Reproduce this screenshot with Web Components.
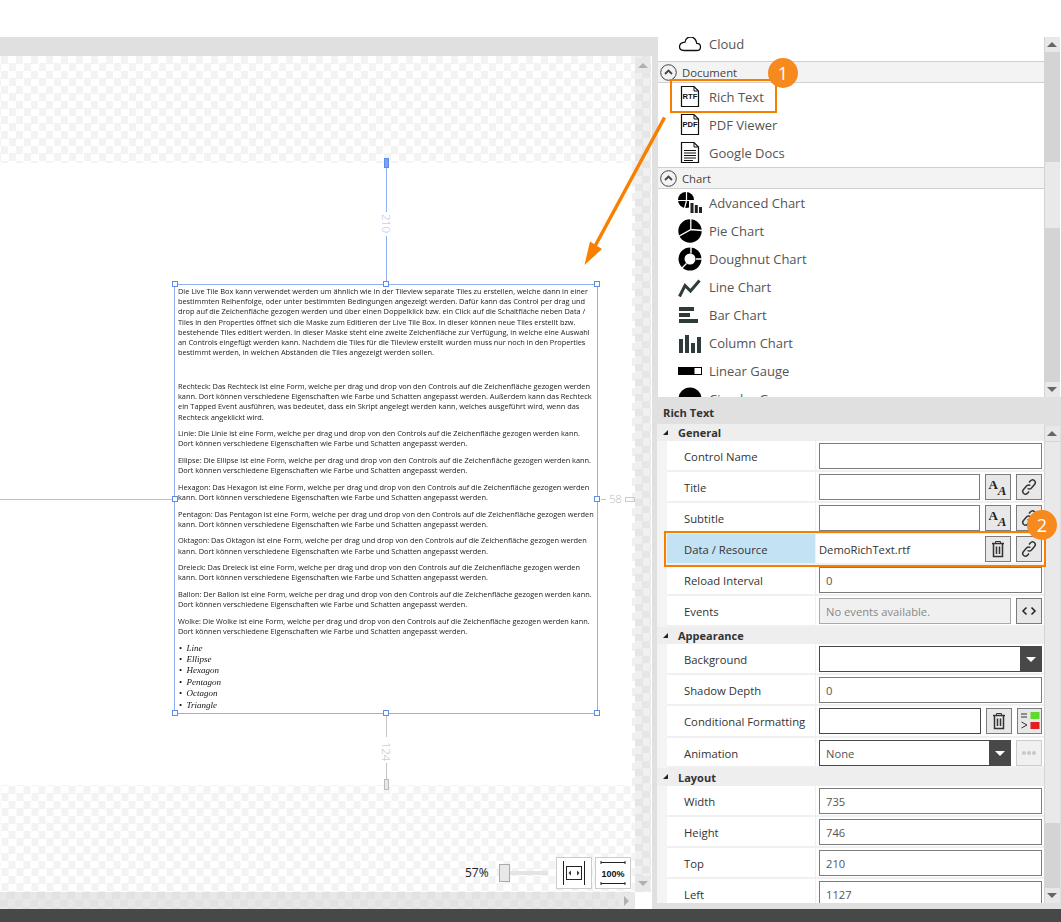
<!DOCTYPE html>
<html>
<head>
<meta charset="utf-8">
<title>Rich Text designer</title>
<style>
  html, body { margin: 0; padding: 0; background: #fff; }
  body { width: 1061px; height: 922px; overflow: hidden; font-family: "Open Sans", "Liberation Sans", sans-serif; }
</style>
</head>
<body>
<app-shell>
  <canvas-pane slot="canvas"></canvas-pane>
  <toolbox-list slot="toolbox">
    <toolbox-item icon="cloud" first>Cloud</toolbox-item>
    <toolbox-group>Document</toolbox-group>
    <toolbox-item icon="rtf">Rich Text</toolbox-item>
    <toolbox-item icon="pdf">PDF Viewer</toolbox-item>
    <toolbox-item icon="doc">Google Docs</toolbox-item>
    <toolbox-group>Chart</toolbox-group>
    <toolbox-item icon="advanced">Advanced Chart</toolbox-item>
    <toolbox-item icon="pie">Pie Chart</toolbox-item>
    <toolbox-item icon="doughnut">Doughnut Chart</toolbox-item>
    <toolbox-item icon="line">Line Chart</toolbox-item>
    <toolbox-item icon="bar">Bar Chart</toolbox-item>
    <toolbox-item icon="column">Column Chart</toolbox-item>
    <toolbox-item icon="gauge">Linear Gauge</toolbox-item>
    <toolbox-item icon="circle">Circular Gauge</toolbox-item>
  </toolbox-list>
  <prop-panel slot="props">
    <prop-group>General</prop-group>
    <prop-row label="Control Name"><prop-input></prop-input></prop-row>
    <prop-row label="Title"><prop-input></prop-input><prop-btn icon="font"></prop-btn><prop-btn icon="link"></prop-btn></prop-row>
    <prop-row label="Subtitle"><prop-input></prop-input><prop-btn icon="font"></prop-btn><prop-btn icon="link"></prop-btn></prop-row>
    <prop-row label="Data / Resource" active><prop-input plain value="DemoRichText.rtf"></prop-input><prop-btn icon="trash"></prop-btn><prop-btn icon="link"></prop-btn></prop-row>
    <prop-row label="Reload Interval"><prop-input value="0"></prop-input></prop-row>
    <prop-row label="Events"><prop-input disabled value="No events available."></prop-input><prop-btn icon="code"></prop-btn></prop-row>
    <prop-group>Appearance</prop-group>
    <prop-row label="Background"><prop-input dark drop></prop-input></prop-row>
    <prop-row label="Shadow Depth"><prop-input value="0"></prop-input></prop-row>
    <prop-row label="Conditional Formatting" tall><prop-input dark></prop-input><prop-btn icon="trash"></prop-btn><prop-btn icon="cond" narrow></prop-btn></prop-row>
    <prop-row label="Animation" short><prop-input dark drop value="None"></prop-input><prop-btn icon="dots" disabled></prop-btn></prop-row>
    <prop-group tall>Layout</prop-group>
    <prop-row label="Width"><prop-input value="735"></prop-input></prop-row>
    <prop-row label="Height"><prop-input value="746"></prop-input></prop-row>
    <prop-row label="Top"><prop-input value="210"></prop-input></prop-row>
    <prop-row label="Left"><prop-input value="1127"></prop-input></prop-row>
  </prop-panel>
</app-shell>

<script>
// icons used in the toolbox and on the property buttons
const ICONS = {
  cloud: `<svg width="24" height="24" viewBox="0 0 24 24"><path d="M6 18.500h12.500c2.600 0 4-1.500 4-3.600 0-2.200-1.600-3.600-3.700-3.600C18 7.500 15.600 5 12.500 5c-3 0-5 2-5.500 5.200C3.800 10.500 1.500 12.200 1.500 14.800c0 2.200 1.800 3.700 4.500 3.700z" fill="#fff" stroke="#111" stroke-width="1.300"/></svg>`,
  rtf: fileIcon("RTF"),
  pdf: fileIcon("PDF"),
  doc: `<svg width="24" height="24" viewBox="0 0 24 24"><path d="M3.500 1.500h12.500l4.500 4.500v15.500h-17z" fill="#fff" stroke="#111" stroke-width="1.200"/><path d="M16 1.500v4.500h4.500" fill="none" stroke="#111"/><path d="M6 9.500h12M6 12h12M6 14.500h12M6 17h12M6 19.500h9" stroke="#111" stroke-width="1"/></svg>`,
  advanced: `<svg width="24" height="24" viewBox="0 0 24 24"><circle cx="8" cy="9" r="8" fill="#000"/><path d="M8.500 0v9.500M0 9.500h16M8.500 9.500l-2 8" stroke="#fff" stroke-width="1.200"/><path d="M11 10h13v14H11z" fill="#fff"/><path d="M12.500 12h3v10h-3zM16.800 14h3v8h-3zM21 16h3v6h-3z" fill="#222"/></svg>`,
  pie: `<svg width="24" height="24" viewBox="0 0 24 24"><circle cx="12" cy="12" r="11.700" fill="#000"/><path d="M12.800 0v10.500L0 17.800M12.800 10.500L24 11.500" fill="none" stroke="#fff" stroke-width="1.300"/></svg>`,
  doughnut: `<svg width="24" height="24" viewBox="0 0 24 24"><circle cx="12" cy="12" r="8.500" fill="none" stroke="#000" stroke-width="6"/><path d="M13 0v6.500M18 12h6M8.500 16.500L4 21" stroke="#fff" stroke-width="1.400"/></svg>`,
  line: `<svg width="24" height="24" viewBox="0 0 24 24"><path d="M1.500 21.500L7 10.500l5.500 5.500 9-10.500" fill="none" stroke="#2f3b3b" stroke-width="3"/></svg>`,
  bar: `<svg width="24" height="24" viewBox="0 0 24 24"><path d="M1 1h15v4H1zM1 7h11v4H1zM1 13h19v4H1z" fill="#2f3b3b" transform="translate(0 3)"/></svg>`,
  column: `<svg width="24" height="24" viewBox="0 0 24 24"><path d="M1 8h4v14H1zM7 4h4v18H7zM13 12h4v10h-4zM19 6h4v16h-4z" fill="#2f3b3b"/></svg>`,
  gauge: `<svg width="24" height="24" viewBox="0 0 24 24"><rect x=".500" y="8.500" width="23" height="7" fill="#fff" stroke="#000"/><rect x="0" y="8" width="16.500" height="8" fill="#000"/></svg>`,
  circle: `<svg width="24" height="24" viewBox="0 0 24 24"><circle cx="12" cy="12" r="11.500" fill="#000"/></svg>`,
  font: `<svg width="22" height="22" viewBox="0 0 22 22"><text x="1.500" y="13" font-family="Liberation Serif" font-weight="700" font-size="13" fill="#222">A</text><text x="10.800" y="18.500" font-family="Liberation Serif" font-weight="700" font-style="italic" font-size="13" fill="#222">A</text></svg>`,
  link: `<svg width="18" height="18" viewBox="0 0 18 18" fill="none" stroke="#333" stroke-width="1.500"><path d="M7.500 10.500c1.500 1 3 .5 4-.5l3-3.500c1.200-1.500 1-3-.2-4s-2.800-.800-4 .5L9 4.500"/><path d="M10.500 7.500c-1.500-1-3-.5-4 .5l-3 3.500c-1.200 1.500-1 3 .2 4s2.800.800 4-.5L9 13.500"/></svg>`,
  trash: `<svg width="18" height="18" viewBox="0 0 18 18" fill="none" stroke="#333"><path d="M3 3.500h12" stroke-width="1.500"/><path d="M6.500 3V1.500h5V3" stroke-width="1"/><path d="M4.500 4v12.500h9V4" stroke-width="1.500"/><path d="M7.500 6.500v7.500M10.500 6.500v7.500" stroke-width="1.500"/></svg>`,
  code: `<svg width="18" height="18" viewBox="0 0 18 18" fill="none" stroke="#222" stroke-width="1.500"><path d="M6.500 5.500L3 9l3.500 3.500M11.500 5.500L15 9l-3.500 3.500"/></svg>`,
  cond: `<svg width="24" height="24" viewBox="0 0 24 24"><path d="M3 5h6M3 8h6" stroke="#333"/><rect x="12.500" y="3" width="9" height="7" fill="#5fd92e"/><path d="M3.500 13l5.500 3-5.500 3" fill="none" stroke="#333"/><rect x="12.500" y="13" width="9" height="7" fill="#e0201f"/></svg>`,
  dots: `<svg width="18" height="6" viewBox="0 0 18 6" fill="#c8c8c8"><circle cx="4" cy="3" r="2"/><circle cx="9" cy="3" r="2"/><circle cx="14" cy="3" r="2"/></svg>`
};

function fileIcon(label) {
  return `<svg width="24" height="24" viewBox="0 0 24 24"><path d="M3.500 1.500h12.500l4.500 4.500v15.500h-17z" fill="#fff" stroke="#111" stroke-width="1.200"/><path d="M16 1.500v4.500h4.500" fill="none" stroke="#111"/><text x="12" y="14.300" text-anchor="middle" font-family="Liberation Sans" font-weight="700" font-size="7.600" fill="#111">${label}</text></svg>`;
}

class AppShell extends HTMLElement {
  constructor() {
    super();
    const shadow = this.attachShadow({ mode: "open" });
    shadow.innerHTML = `<style>
      :host { display: flex; flex-direction: column; width: 1061px; height: 922px; position: relative; overflow: hidden; background: #fff; }
      .top { height: 37px; flex: none; }
      .main { flex: 1; display: flex; min-height: 0; background: #e0e0e0; }
      .left { width: 652px; flex: none; display: flex; }
      .gutter { width: 6px; flex: none; }
      .right { flex: 1; display: flex; flex-direction: column; min-width: 0; }
      .title { height: 27px; flex: none; padding-left: 5px; font: 700 11.200px/32px "Open Sans", sans-serif; color: #333; }
      .status { height: 13px; flex: none; background: #484848; }
      .callouts { position: absolute; left: 0; top: 0; width: 1061px; height: 922px; pointer-events: none; }
      .box { position: absolute; border: 2px solid #f77f00; box-sizing: border-box; }
      .badge { position: absolute; width: 30px; height: 30px; border-radius: 50%; background: #f68a1e; color: #fff; font: 400 18px/30px "Open Sans", sans-serif; text-align: center; }
      svg { position: absolute; left: 0; top: 0; }
    </style>
    <div class="top"></div>
    <div class="main">
      <div class="left"><slot name="canvas"></slot></div>
      <div class="gutter"></div>
      <div class="right">
        <slot name="toolbox"></slot>
        <div class="title">Rich Text</div>
        <slot name="props"></slot>
      </div>
    </div>
    <div class="status"></div>
    <div class="callouts">
      <svg width="1061" height="922"><path d="M664.500 117.500L594 248" fill="none" stroke="#f97f00" stroke-width="3.500"/><path d="M584.500 265L590 241.500 602 249z" fill="#f97f00"/></svg>
      <div class="box" style="left:670px;top:79px;width:107px;height:34px"></div>
      <div class="badge" style="left:768px;top:58px">1</div>
      <div class="box" style="left:664px;top:531px;width:382px;height:36px"></div>
      <div class="badge" style="left:1027px;top:510px">2</div>
    </div>`;
  }
}

class ScrollButton extends HTMLElement {
  constructor() {
    super();
    const shadow = this.attachShadow({ mode: "open" });
    shadow.innerHTML = `<style>
      :host { display: flex; align-items: center; justify-content: center; width: 15px; height: 15px; flex: none; background: #e8e8e8; }
      i { width: 0; height: 0; display: block; }
      :host([dir="up"]) i { border-left: 5px solid transparent; border-right: 5px solid transparent; border-bottom: 5px solid var(--arrow, #666); }
      :host([dir="down"]) i { border-left: 5px solid transparent; border-right: 5px solid transparent; border-top: 5px solid var(--arrow, #666); }
      :host([dir="right"]) i { border-top: 5px solid transparent; border-bottom: 5px solid transparent; border-left: 5px solid var(--arrow, #666); }
    </style><i></i>`;
  }
}

class VScroll extends HTMLElement {
  constructor() {
    super();
    const shadow = this.attachShadow({ mode: "open" });
    shadow.innerHTML = `<style>
      :host { display: flex; flex-direction: column; align-items: center; width: 16px; flex: none; box-sizing: border-box; background: #d4d4d4; position: relative; }
      .thumb { width: 15px; background: #e9e9e9; flex: none; height: var(--thumb-h, 0px); margin-top: var(--thumb-top, 0px); }
      .rest { flex: 1; }
    </style>
    <scroll-button dir="up"></scroll-button>
    <div class="thumb"></div>
    <div class="rest"></div>
    <scroll-button dir="down"></scroll-button>`;
  }
}

class CanvasPane extends HTMLElement {
  constructor() {
    super();
    const shadow = this.attachShadow({ mode: "open" });
    shadow.innerHTML = `<style>
      :host { display: flex; flex-direction: column; width: 652px; height: 872px; }
      .head { height: 19px; flex: none; background: #e0e0e0; }
      .mid { flex: 1; display: flex; min-height: 0; background: #fff; }
      .area { width: 635px; flex: none; display: flex; flex-direction: column; }
      .check { height: 107px; flex: none; background: repeating-conic-gradient(#fff 0 25%, #f3f3f3 0 50%) 1px 0 / 15px 15px; position: relative; }
      .check.low { background-position: 8.500px 1px; }
      .page { flex: 1; background: #fff; position: relative; }
      .edge { position: absolute; right: 0; top: 0; bottom: 0; width: 3px; background: repeating-conic-gradient(#fff 0 25%, #f0f0f0 0 50%) 0 0 / 15px 15px; }
      .vbar { width: 16px; flex: none; display: flex; flex-direction: column; padding: 2px 0 1px; box-sizing: border-box; align-items: flex-start; background: repeating-conic-gradient(#e6e6e6 0 25%, #f0f0f0 0 50%) 0 0 / 15px 15px; }
      .vbar .sp { flex: 1; }
      .hrow { height: 17px; flex: none; display: flex; background: #fff; }
      .hbar { width: 635px; flex: none; display: flex; justify-content: flex-end; align-items: center; padding-right: 1px; box-sizing: border-box; background: repeating-conic-gradient(#e2e2e2 0 25%, #e8e8e8 0 50%) 0 0 / 15px 15px; }
      scroll-button { --arrow: #b0b0b0; background: #e8e8e8; }
      .sel { position: absolute; left: 174px; top: 121px; width: 424px; height: 430px; box-sizing: border-box; border: 1px solid #8fb0ee; background: #fff; }
      .guide { position: absolute; }
      .blue { background: #8fb0ee; }
      .grey { background: #c4c4c4; }
      .num { position: absolute; font: 300 11.500px/14px "Open Sans", sans-serif; letter-spacing: -.3px; }
      .rot { writing-mode: vertical-rl; }
      .h { position: absolute; width: 6px; height: 6px; box-sizing: border-box; border: 1px solid #5b8def; background: #fff; }
      .zoom { position: absolute; left: 465px; top: 72px; display: flex; align-items: center; height: 32px; }
      .pct { font: 400 12px/32px "Open Sans", sans-serif; color: #222; width: 34px; }
      .slider { width: 49px; height: 18px; position: relative; margin-right: 8px; }
      .slider::before { content: ""; position: absolute; left: 0; right: 0; top: 7px; height: 4px; background: #e4e4e4; }
      .slider::after { content: ""; position: absolute; left: 0; top: 0; width: 9px; height: 16px; border: 1px solid #aaa; background: #e8e8e8; }
      .zb { width: 36px; height: 32px; box-sizing: border-box; border: 1px solid #ccc; background: #fff; margin-right: 3px; display: flex; align-items: center; justify-content: center; }
    </style>
    <div class="head"></div>
    <div class="mid">
      <div class="area">
        <div class="check"></div>
        <div class="page">
          <div class="edge"></div>
          <div class="guide blue" style="left:386px;top:0;width:1px;height:49px"></div>
          <div class="guide blue" style="left:386px;top:73px;width:1px;height:48px"></div>
          <div class="guide" style="left:384px;top:-5px;width:5px;height:10px;background:#7ea3ef;border:1px solid #5b8def;box-sizing:border-box"></div>
          <div class="num rot" style="left:379px;top:51px;color:#a9c2f2">210</div>
          <div class="guide" style="left:0;top:336px;width:172px;height:1px;background:#b4bfd2"></div>
          <div class="guide grey" style="left:601px;top:336px;width:5px;height:1px"></div>
          <div class="num" style="left:609px;top:329px;color:#bcbcbc">58</div>
          <div class="guide" style="left:625px;top:334px;width:10px;height:5px;border:1px solid #ccc;box-sizing:border-box"></div>
          <div class="guide grey" style="left:386px;top:550px;width:1px;height:24px"></div>
          <div class="num rot" style="left:379px;top:579px;color:#bcbcbc">124</div>
          <div class="guide grey" style="left:386px;top:600px;width:1px;height:16px"></div>
          <div class="sel"><rich-doc></rich-doc></div>
          <div class="h" style="left:172px;top:118px"></div>
          <div class="h" style="left:383px;top:118px"></div>
          <div class="h" style="left:594px;top:118px"></div>
          <div class="h" style="left:172px;top:333px"></div>
          <div class="h" style="left:594px;top:333px"></div>
          <div class="h" style="left:172px;top:547px"></div>
          <div class="h" style="left:383px;top:547px"></div>
          <div class="h" style="left:594px;top:547px"></div>
        </div>
        <div class="check low">
          <div class="guide" style="left:384px;top:-6px;width:5px;height:11px;border:1px solid #bbb;background:#e8e8e8;box-sizing:border-box"></div>
          <div class="zoom">
            <span class="pct">57%</span>
            <div class="slider"></div>
            <div class="zb"><svg width="26" height="26" viewBox="0 0 26 26"><path d="M2.500 1v24M23.500 1v24" stroke="#222"/><rect x="5.500" y="6.500" width="15" height="13" fill="#fff" stroke="#222"/><path d="M10 10.500v5L7.500 13zM16 10.500v5l2.500-2.500z" fill="#333"/></svg></div>
            <div class="zb"><svg width="26" height="26" viewBox="0 0 26 26"><path d="M1 2.500h24M1 23.500h24M1 1v3M25 1v3M1 22v3M25 22v3" stroke="#222"/><text x="13" y="16.500" text-anchor="middle" font-family="Liberation Sans" font-weight="700" font-size="9" fill="#111">100%</text></svg></div>
          </div>
        </div>
      </div>
      <div class="vbar"><scroll-button dir="up"></scroll-button><div class="sp"></div><scroll-button dir="down"></scroll-button></div>
    </div>
    <div class="hrow"><div class="hbar"><scroll-button dir="right"></scroll-button></div></div>`;
  }
}

class RichDoc extends HTMLElement {
  constructor() {
    super();
    const shadow = this.attachShadow({ mode: "open" });
    const para = (lines, extra) => `<p style="${extra || ""}">${lines.join("<br>")}</p>`;
    const rest = "Dort können verschiedene Eigenschaften wie Farbe und Schatten angepasst werden.";
    const rest2 = "kann. " + rest;
    shadow.innerHTML = `<style>
      :host { display: block; padding: 1px 0 0 3px; font: 400 7.400px/10.200px "Open Sans", sans-serif; letter-spacing: -.025px; color: #222; white-space: nowrap; filter: blur(.2px); }
      p { margin: 0 0 6.400px; }
      ul { margin: 0; padding: 0; list-style: none; font: italic 400 9px/11.400px "Liberation Serif", serif; color: #111; letter-spacing: 0; }
      li { display: flex; }
      li::before { content: "•"; width: 8.500px; flex: none; padding-left: 1px; box-sizing: border-box; font-style: normal; }
    </style>
    ${para([
      "Die Live Tile Box kann verwendet werden um ähnlich wie in der Tileview separate Tiles zu erstellen, welche dann in einer",
      "bestimmten Reihenfolge, oder unter bestimmten Bedingungen angezeigt werden. Dafür kann das Control per drag und",
      "drop auf die Zeichenfläche gezogen werden und über einen Doppelklick bzw. ein Click auf die Schaltfläche neben Data /",
      "Tiles in den Properties öffnet sich die Maske zum Editieren der Live Tile Box. In dieser können neue Tiles erstellt bzw.",
      "bestehende Tiles editiert werden. In dieser Maske steht eine zweite Zeichenfläche zur Verfügung, in welche eine Auswahl",
      "an Controls eingefügt werden kann. Nachdem die Tiles für die Tileview erstellt wurden muss nur noch in den Properties",
      "bestimmt werden, in welchen Abständen die Tiles angezeigt werden sollen."
    ], "margin-bottom:23.500px")}
    ${para([
      "Rechteck: Das Rechteck ist eine Form, welche per drag und drop von den Controls auf die Zeichenfläche gezogen werden",
      "kann. Dort können verschiedene Eigenschaften wie Farbe und Schatten angepasst werden. Außerdem kann das Rechteck",
      "ein Tapped Event ausführen, was bedeutet, dass ein Skript angelegt werden kann, welches ausgeführt wird, wenn das",
      "Rechteck angeklickt wird."
    ])}
    ${para(["Linie: Die Linie ist eine Form, welche per drag und drop von den Controls auf die Zeichenfläche gezogen werden kann.", rest])}
    ${para(["Ellipse: Die Ellipse ist eine Form, welche per drag und drop von den Controls auf die Zeichenfläche gezogen werden kann.", rest])}
    ${para(["Hexagon: Das Hexagon ist eine Form, welche per drag und drop von den Controls auf die Zeichenfläche gezogen werden", rest2])}
    ${para(["Pentagon: Das Pentagon ist eine Form, welche per drag und drop von den Controls auf die Zeichenfläche gezogen werden", rest2])}
    ${para(["Oktagon: Das Oktagon ist eine Form, welche per drag und drop von den Controls auf die Zeichenfläche gezogen werden", rest2])}
    ${para(["Dreieck: Das Dreieck ist eine Form, welche per drag und drop von den Controls auf die Zeichenfläche gezogen werden", rest2])}
    ${para(["Ballon: Der Ballon ist eine Form, welche per drag und drop von den Controls auf die Zeichenfläche gezogen werden kann.", rest])}
    ${para(["Wolke: Die Wolke ist eine Form, welche per drag und drop von den Controls auf die Zeichenfläche gezogen werden kann.", rest])}
    <ul><li>Line</li><li>Ellipse</li><li>Hexagon</li><li>Pentagon</li><li>Octagon</li><li>Triangle</li></ul>`;
  }
}

class ToolboxList extends HTMLElement {
  constructor() {
    super();
    const shadow = this.attachShadow({ mode: "open" });
    shadow.innerHTML = `<style>
      :host { display: flex; height: 360px; flex: none; background: #fff; }
      .items { width: 386px; flex: none; height: 360px; overflow: hidden; }
      .inner { margin-top: -7px; }
      v-scroll { --thumb-h: 66px; --thumb-top: 110px; }
      .end { width: 1px; background: #fff; }
    </style>
    <div class="items"><div class="inner"><slot></slot></div></div>
    <v-scroll></v-scroll>
    <div class="end"></div>`;
  }
}

class ToolboxGroup extends HTMLElement {
  constructor() {
    super();
    const shadow = this.attachShadow({ mode: "open" });
    shadow.innerHTML = `<style>
      :host { display: flex; align-items: center; height: 22px; box-sizing: border-box; background: #f3f3f3; border-top: 1px solid #d0d0d0; border-bottom: 1px solid #d0d0d0; padding-left: 2px; font: 400 11.300px/20px "Open Sans", sans-serif; color: #444; }
      svg { margin-right: 5px; flex: none; }
      span { padding-top: 2px; }
    </style>
    <svg width="17" height="17" viewBox="0 0 17 17" fill="none" stroke="#444"><circle cx="8.500" cy="8.500" r="7.800" stroke-width="1"/><path d="M5 10l3.500-3.500L12 10" stroke-width="1.800"/></svg>
    <span><slot></slot></span>`;
  }
}

class ToolboxItem extends HTMLElement {
  constructor() {
    super();
    const shadow = this.attachShadow({ mode: "open" });
    shadow.innerHTML = `<style>
      :host { display: flex; align-items: center; height: 28px; padding-left: 20px; font: 400 13px/28px "Open Sans", sans-serif; color: #555; }
      :host([first]) { margin-bottom: 3px; }
      .ic { width: 24px; height: 24px; margin-right: 7px; flex: none; }
      svg { display: block; }
    </style>
    <span class="ic">${ICONS[this.getAttribute("icon")] || ""}</span>
    <slot></slot>`;
  }
}

class PropPanel extends HTMLElement {
  constructor() {
    super();
    const shadow = this.attachShadow({ mode: "open" });
    shadow.innerHTML = `<style>
      :host { display: flex; height: 479px; flex: none; margin-left: -1px; margin-bottom: 6px; }
      .rows { width: 387px; flex: none; overflow: hidden; background: #f4f4f4; }
      v-scroll { --thumb-h: 381px; --thumb-top: 1px; margin-top: 2px; }
    </style>
    <div class="rows"><slot></slot></div>
    <v-scroll></v-scroll>`;
  }
}

class PropGroup extends HTMLElement {
  constructor() {
    super();
    const shadow = this.attachShadow({ mode: "open" });
    shadow.innerHTML = `<style>
      :host { display: flex; align-items: center; height: 17px; box-sizing: border-box; padding-top: 1px; background: #eee; padding-left: 6px; font: 700 11px/16px "Open Sans", sans-serif; color: #333; }
      :host([tall]) { height: 18px; }
      svg { margin-right: 10px; margin-top: -2px; flex: none; }
    </style>
    <svg width="5" height="5" viewBox="0 0 5 5"><path d="M5 0v5H0z" fill="#222"/></svg>
    <slot></slot>`;
  }
}

class PropRow extends HTMLElement {
  constructor() {
    super();
    const shadow = this.attachShadow({ mode: "open" });
    shadow.innerHTML = `<style>
      :host { display: flex; height: 31px; box-sizing: border-box; margin-left: 10px; background: #fff; border-bottom: 2px solid #f0f0f0; font: 400 11.300px/31px "Open Sans", sans-serif; color: #333; }
      :host([tall]) { height: 32px; }
      :host([short]) { height: 30px; }
      .label { width: 149px; flex: none; box-sizing: border-box; padding-left: 17px; border-right: 1px solid #f0f0f0; white-space: nowrap; }
      :host([active]) .label { background: #c3e3f5; }
      .ctl { flex: 1; display: flex; gap: 5px; padding: 2px 2px 0 3px; min-width: 0; }
    </style>
    <div class="label">${this.getAttribute("label")}</div>
    <div class="ctl"><slot></slot></div>`;
  }
}

class PropInput extends HTMLElement {
  constructor() {
    super();
    const shadow = this.attachShadow({ mode: "open" });
    const drop = this.hasAttribute("drop") ? `<span class="drop"><i></i></span>` : "";
    shadow.innerHTML = `<style>
      :host { display: flex; flex: 1; min-width: 0; height: 26px; box-sizing: border-box; border: 1px solid #7c7c7c; background: #fff; font: 400 11.200px/26px "Open Sans", sans-serif; color: #555; }
      :host([dark]) { border-color: #484848; }
      :host([plain]) { border: 0; background: transparent; color: #333; line-height: 28px; }
      :host([plain]) .v { padding-left: 0; }
      :host([disabled]) { background: #f0f0f0; border-color: #aaa; color: #888; }
      .v { flex: 1; padding-left: 6px; white-space: nowrap; overflow: hidden; }
      .drop { width: 21px; flex: none; background: #484848; display: flex; align-items: center; justify-content: center; }
      i { width: 0; height: 0; border: 5px solid transparent; border-top: 5px solid #fff; border-bottom: 0; }
    </style><span class="v">${this.getAttribute("value") || ""}</span>${drop}`;
  }
}

class PropBtn extends HTMLElement {
  constructor() {
    super();
    const shadow = this.attachShadow({ mode: "open" });
    shadow.innerHTML = `<style>
      :host { display: flex; align-items: center; justify-content: center; flex: none; width: 26px; height: 26px; box-sizing: border-box; border: 1px solid #7c7c7c; background: #e8e8e8; }
      :host([narrow]) { width: 25px; }
      :host([disabled]) { border-color: #ccc; background: #f0f0f0; }
      svg { display: block; flex: none; }
    </style>${ICONS[this.getAttribute("icon")] || ""}`;
  }
}

// children first, so their shadow trees are ready when the parents upgrade
customElements.define("scroll-button", ScrollButton);
customElements.define("v-scroll", VScroll);
customElements.define("rich-doc", RichDoc);
customElements.define("canvas-pane", CanvasPane);
customElements.define("toolbox-group", ToolboxGroup);
customElements.define("toolbox-item", ToolboxItem);
customElements.define("toolbox-list", ToolboxList);
customElements.define("prop-input", PropInput);
customElements.define("prop-btn", PropBtn);
customElements.define("prop-row", PropRow);
customElements.define("prop-group", PropGroup);
customElements.define("prop-panel", PropPanel);
customElements.define("app-shell", AppShell);
</script>
</body>
</html>
